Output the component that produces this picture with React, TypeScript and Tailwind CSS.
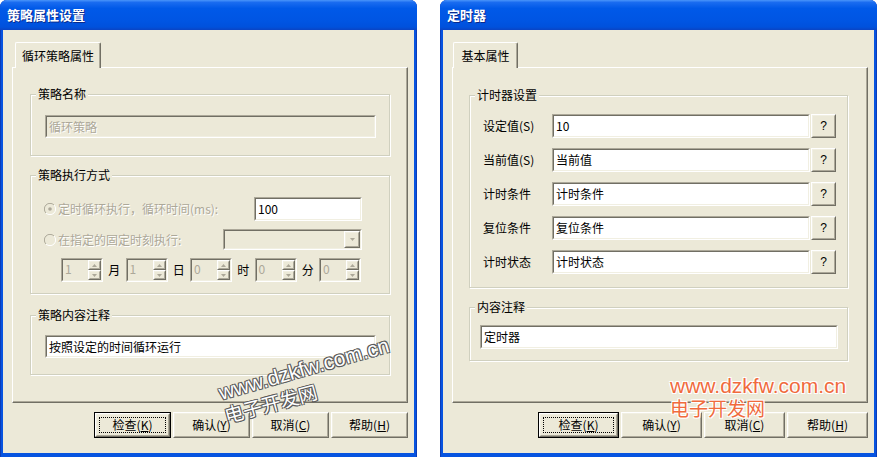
import type { ReactNode } from "react";

type P = { className?: string; children?: ReactNode };

const cx = (...c: (string | false | undefined)[]) => c.filter(Boolean).join(" ");

function Sunken({ className, children, disabled }: P & { disabled?: boolean }) {
  return (
    <div className={cx("flex shrink-0 border border-t-[#ACA899] border-l-[#ACA899] border-r-white border-b-white", className)}>
      <div
        className={cx(
          "flex flex-1 items-center overflow-hidden border border-t-[#716F64] border-l-[#716F64] border-r-[#F1EFE2] border-b-[#F1EFE2]",
          disabled ? "bg-[#ECE9D8] text-[#ACA899]" : "bg-white text-black"
        )}
      >
        {children}
      </div>
    </div>
  );
}

function Raised({ className, children }: P) {
  return (
    <div className={cx("flex shrink-0 border border-t-white border-l-white border-r-[#716F64] border-b-[#716F64] bg-[#ECE9D8]", className)}>
      <div className="flex flex-1 items-center justify-center border border-t-[#F1EFE2] border-l-[#F1EFE2] border-r-[#ACA899] border-b-[#ACA899]">
        {children}
      </div>
    </div>
  );
}

function Tri({ down }: { down?: boolean }) {
  return (
    <svg width="5" height="3" viewBox="0 0 5 3">
      <path d={down ? "M0 0h5L2.5 3z" : "M0 3h5L2.5 0z"} fill="#ACA899" />
    </svg>
  );
}

function Radio({ checked }: { checked?: boolean }) {
  return (
    <svg width="12" height="12" viewBox="0 0 12 12" className="shrink-0">
      <path d="M10 2A5.5 5.5 0 0 0 2 10" fill="none" stroke="#ACA899" />
      <path d="M2 10A5.5 5.5 0 0 0 10 2" fill="none" stroke="#fff" />
      <circle cx="6" cy="6" r="4.5" fill="#ECE9D8" />
      {checked && <circle cx="6" cy="6" r="1.8" fill="#ACA899" />}
    </svg>
  );
}

function Group({ label, className, children }: P & { label: string }) {
  return (
    <div className={cx("relative border border-[#D0D0BF] shadow-[inset_1px_1px_0_#fff,1px_1px_0_#fff]", className)}>
      <span className="absolute left-[5px] top-[-9px] bg-[#ECE9D8] px-[2px] leading-[16px]">{label}</span>
      {children}
    </div>
  );
}

function Tab({ label, className }: P & { label: string }) {
  return (
    <div
      className={cx(
        "relative mt-[12px] flex h-[26px] items-center justify-center rounded-t-[2px] border-x border-t border-l-white border-t-white border-r-[#716F64] bg-[#ECE9D8] shadow-[inset_-1px_0_0_#ACA899]",
        className
      )}
    >
      {label}
    </div>
  );
}

function Panel({ className, children }: P) {
  return (
    <div
      className={cx(
        "-mt-px border border-t-white border-l-white border-r-[#716F64] border-b-[#716F64] shadow-[inset_-1px_-1px_0_#ACA899]",
        className
      )}
    >
      {children}
    </div>
  );
}

function Spin({ value }: { value: string }) {
  return (
    <Sunken disabled className="h-[24px] w-[42px]">
      <span className="flex-1 self-start pl-[2px] pt-[2px] leading-[14px]">{value}</span>
      <div className="flex w-[13px] flex-col self-stretch">
        <Raised className="flex-1">
          <Tri />
        </Raised>
        <Raised className="flex-1">
          <Tri down />
        </Raised>
      </div>
    </Sunken>
  );
}

function Btn({ label, hot, className, def }: { label: string; hot: string; className?: string; def?: boolean }) {
  const text = (
    <span>
      {label}(<span className="underline">{hot}</span>)
    </span>
  );
  if (def)
    return (
      <div className={cx("flex h-[26px] border border-black", className)}>
        <Raised className="flex-1">
          <div className="flex h-[calc(100%-4px)] w-[calc(100%-4px)] items-center justify-center border border-dotted border-black">
            {text}
          </div>
        </Raised>
      </div>
    );
  return <Raised className={cx("h-[26px]", className)}>{text}</Raised>;
}

function Window({ title, className, children }: P & { title: string }) {
  return (
    <div className={cx("flex h-[457px] shrink-0 flex-col overflow-hidden rounded-t-[7px] bg-[#0653E0] shadow-[inset_1px_0_0_#0a3cb8,inset_-1px_0_0_#0a3cb8]", className)}>
      <div className="flex h-[30px] shrink-0 items-center bg-[linear-gradient(to_bottom,#4a95fa_0%,#1a6cf0_8%,#0059e8_28%,#0055e3_70%,#0051dc_90%,#0a44c4_100%)] pl-[7px] text-[13px] font-bold text-white [text-shadow:1px_1px_0_#0b2a8a]">
        {title}
      </div>
      <div className="mx-[3px] mb-[4px] flex flex-1 flex-col bg-[#ECE9D8]">{children}</div>
    </div>
  );
}

const timerRows = [
  ["设定值(S)", "10"],
  ["当前值(S)", "当前值"],
  ["计时条件", "计时条件"],
  ["复位条件", "复位条件"],
  ["计时状态", "计时状态"],
];

const buttons = [
  ["检查", "K"],
  ["确认", "Y"],
  ["取消", "C"],
  ["帮助", "H"],
];

export default function App() {
  return (
    <div className="relative flex h-[457px] w-[880px] overflow-hidden bg-white font-['Noto_Sans_CJK_SC','Noto_Sans_CJK_JP',sans-serif] text-[12px] leading-[16px] text-black">
      <Window title="策略属性设置" className="w-[417px]">
        <Tab label="循环策略属性" className="ml-[12px] w-[86px]" />
        <Panel className="ml-[9px] h-[336px] w-[396px] pl-[17px] pt-[26px]">
          <Group label="策略名称" className="h-[62px] w-[360px] pl-[14px] pt-[20px]">
            <Sunken disabled className="h-[23px] w-[331px]">
              <span className="pl-[2px] [text-shadow:1px_1px_0_#fff]">循环策略</span>
            </Sunken>
          </Group>

          <Group label="策略执行方式" className="mt-[19px] h-[119px] w-[360px] pl-[13px] pr-[27px] pt-[21px]">
            <div className="flex h-[24px] items-center">
              <Radio checked />
              <span className="ml-[2px] text-[#ACA899] [text-shadow:1px_1px_0_#fff]">定时循环执行，循环时间(ms):</span>
              <Sunken className="ml-auto h-[24px] w-[108px]">
                <span className="pl-[2px]">100</span>
              </Sunken>
            </div>
            <div className="mt-[8px] flex h-[21px] items-center">
              <Radio />
              <span className="ml-[2px] text-[#ACA899] [text-shadow:1px_1px_0_#fff]">在指定的固定时刻执行:</span>
              <Sunken disabled className="ml-auto h-[21px] w-[139px]">
                <span className="flex-1" />
                <Raised className="w-[16px] self-stretch">
                  <Tri down />
                </Raised>
              </Sunken>
            </div>
            <div className="ml-[17px] mt-[8px] flex items-center">
              <Spin value="1" />
              <span className="w-[22.5px] text-center">月</span>
              <Spin value="1" />
              <span className="w-[22.5px] text-center">日</span>
              <Spin value="0" />
              <span className="w-[22.5px] text-center">时</span>
              <Spin value="0" />
              <span className="w-[22.5px] text-center">分</span>
              <Spin value="0" />
            </div>
          </Group>

          <Group label="策略内容注释" className="mt-[21px] h-[60px] w-[360px] pl-[14px] pt-[19px]">
            <Sunken className="h-[23px] w-[331px]">
              <span className="pl-[2px]">按照设定的时间循环运行</span>
            </Sunken>
          </Group>
        </Panel>
        <div className="mr-[6px] mt-[9px] flex justify-end gap-[2px]">
          {buttons.map(([l, k], i) => (
            <Btn key={k} label={l} hot={k} def={i === 0} className="w-[77px]" />
          ))}
        </div>
      </Window>

      <Window title="定时器" className="ml-[23px] w-[437px]">
        <Tab label="基本属性" className="ml-[10px] w-[65px]" />
        <Panel className="ml-[9px] h-[336px] w-[416px] pl-[16px] pt-[27px]">
          <Group label="计时器设置" className="h-[193px] w-[379px] pl-[13px] pt-[18px]">
            <div className="flex flex-col gap-[10px]">
              {timerRows.map(([l, v]) => (
                <div key={l} className="flex h-[24px] items-center">
                  <span className="w-[69px]">{l}</span>
                  <Sunken className="h-[24px] w-[258px]">
                    <span className="pl-[2px]">{v}</span>
                  </Sunken>
                  <Raised className="ml-[1px] h-[24px] w-[25px]">
                    <span className="font-['Liberation_Sans',sans-serif] text-[12px]">?</span>
                  </Raised>
                </div>
              ))}
            </div>
          </Group>
          <Group label="内容注释" className="mt-[19px] h-[54px] w-[379px] pl-[10px] pt-[17px]">
            <Sunken className="h-[24px] w-[358px]">
              <span className="pl-[2px]">定时器</span>
            </Sunken>
          </Group>
        </Panel>
        <div className="mr-[6px] mt-[9px] flex justify-end gap-[2px]">
          {buttons.map(([l, k], i) => (
            <Btn key={k} label={l} hot={k} def={i === 0} className="w-[81px]" />
          ))}
        </div>
      </Window>

      <div className="pointer-events-none absolute left-[222px] top-[382px] origin-bottom-left rotate-[-16deg] whitespace-nowrap font-['Liberation_Sans',sans-serif] text-[21px] leading-none text-white [text-shadow:-1px_-1px_0_#5a5a5a,1px_-1px_0_#5a5a5a,-1px_1px_0_#5a5a5a,1px_1px_0_#5a5a5a]">
        www.dzkfw.com.cn
      </div>
      <div className="pointer-events-none absolute left-[227px] top-[405px] origin-bottom-left rotate-[-15deg] whitespace-nowrap text-[19px] leading-none text-white [text-shadow:-1px_-1px_0_#5a5a5a,1px_-1px_0_#5a5a5a,-1px_1px_0_#5a5a5a,1px_1px_0_#5a5a5a]">
        电子开发网
      </div>
      <div className="pointer-events-none absolute left-[670px] top-[375px] whitespace-nowrap font-['Liberation_Sans',sans-serif] text-[21px] leading-none text-[#F06B3D] [text-shadow:-1px_-1px_0_#fff,1px_-1px_0_#fff,-1px_1px_0_#fff,1px_1px_0_#fff]">
        www.dzkfw.com.cn
      </div>
      <div className="pointer-events-none absolute left-[670px] top-[398px] whitespace-nowrap text-[19px] leading-none text-[#F06B3D] [text-shadow:-1px_-1px_0_#fff,1px_-1px_0_#fff,-1px_1px_0_#fff,1px_1px_0_#fff]">
        电子开发网
      </div>
    </div>
  );
}
